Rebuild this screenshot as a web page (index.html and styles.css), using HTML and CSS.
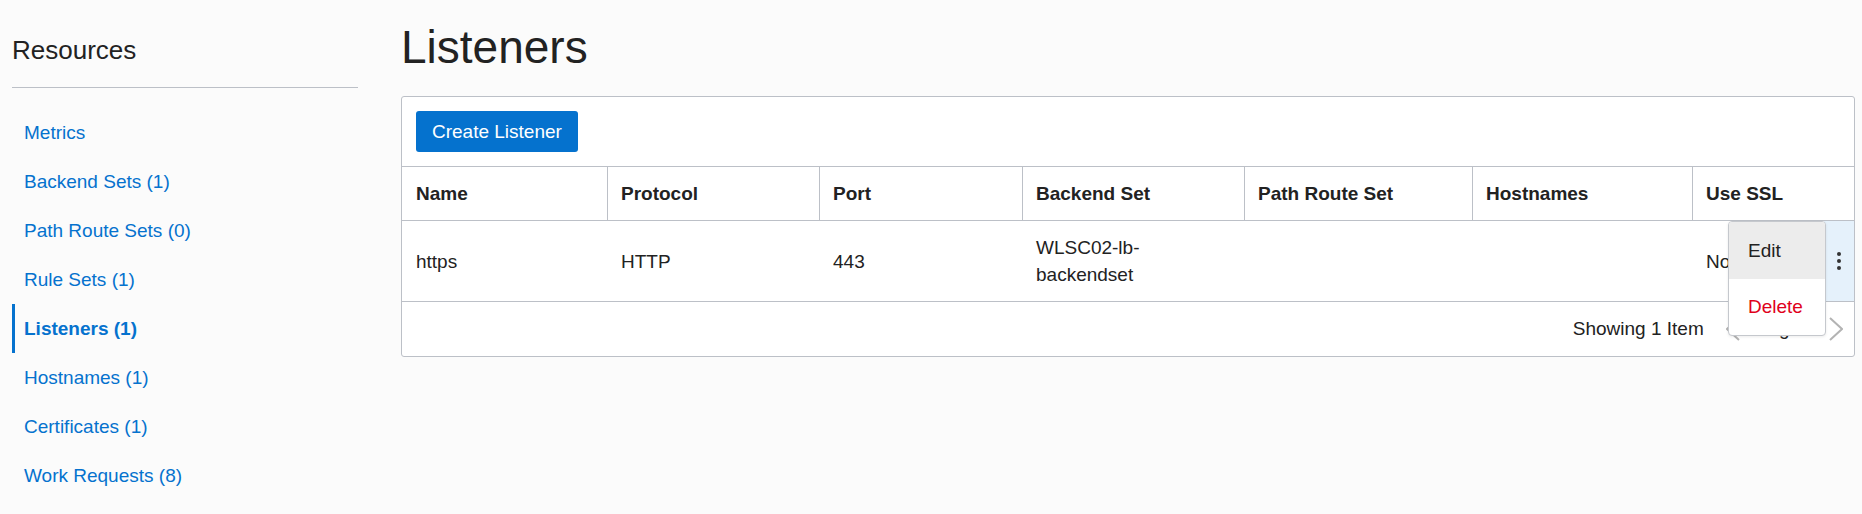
FILE: index.html
```html
<!DOCTYPE html>
<html lang="en">
<head>
<meta charset="utf-8">
<title>Listeners</title>
<link rel="stylesheet" href="styles.css">
</head>
<body>
<div class="page">
  <aside class="sidebar">
    <h2 class="side-title">Resources</h2>
    <div class="side-rule"></div>
    <nav class="side-nav">
      <a class="nav-item" href="#">Metrics</a>
      <a class="nav-item" href="#">Backend Sets (1)</a>
      <a class="nav-item" href="#">Path Route Sets (0)</a>
      <a class="nav-item" href="#">Rule Sets (1)</a>
      <a class="nav-item active" href="#">Listeners (1)</a>
      <a class="nav-item" href="#">Hostnames (1)</a>
      <a class="nav-item" href="#">Certificates (1)</a>
      <a class="nav-item" href="#">Work Requests (8)</a>
    </nav>
  </aside>
  <main class="main">
    <h1 class="title">Listeners</h1>
    <section class="panel">
      <div class="toolbar">
        <button class="btn-primary" type="button">Create Listener</button>
      </div>
      <table class="grid">
        <colgroup>
          <col class="c-name">
          <col class="c-proto">
          <col class="c-port">
          <col class="c-backend">
          <col class="c-path">
          <col class="c-host">
          <col class="c-ssl">
          <col class="c-act">
        </colgroup>
        <thead>
          <tr>
            <th>Name</th>
            <th>Protocol</th>
            <th>Port</th>
            <th>Backend Set</th>
            <th>Path Route Set</th>
            <th>Hostnames</th>
            <th>Use SSL</th>
            <th class="th-act"></th>
          </tr>
        </thead>
        <tbody>
          <tr>
            <td>https</td>
            <td>HTTP</td>
            <td>443</td>
            <td>WLSC02-lb-backendset</td>
            <td></td>
            <td></td>
            <td>No</td>
            <td class="td-act">
              <svg class="kebab" width="4" height="18" viewBox="0 0 4 18" aria-hidden="true">
                <circle cx="2" cy="2" r="2"/>
                <circle cx="2" cy="9" r="2"/>
                <circle cx="2" cy="16" r="2"/>
              </svg>
              <div class="menu">
                <div class="menu-item hover">Edit</div>
                <div class="menu-item danger">Delete</div>
              </div>
            </td>
          </tr>
        </tbody>
      </table>
      <div class="footer">
        <span class="count">Showing 1 Item</span>
        <svg class="chev chev-left" width="14" height="24" viewBox="0 0 14 24" aria-hidden="true">
          <polyline points="13,1 1,12 13,23"/>
        </svg>
        <span class="page-label">Page 1</span>
        <svg class="chev chev-right" width="14" height="24" viewBox="0 0 14 24" aria-hidden="true">
          <polyline points="1,1 13,12 1,23"/>
        </svg>
      </div>
    </section>
  </main>
</div>
</body>
</html>
```
FILE: styles.css
```css
* { box-sizing: border-box; }

html, body {
  margin: 0;
  padding: 0;
  background: #fbfbfb;
}

body {
  font-family: "Liberation Sans", Arial, sans-serif;
  font-size: 19px;
  color: #222;
}

.page {
  display: flex;
  gap: 43px;
  padding: 0 7px 0 12px;
}

/* Sidebar */
.sidebar {
  width: 346px;
  flex: none;
  padding-top: 34px;
}

.side-title {
  margin: 0;
  font-size: 26px;
  line-height: 32px;
  font-weight: normal;
  color: #222;
}

.side-rule {
  margin-top: 21px;
  border-top: 1px solid #bcc0c7;
}

.side-nav {
  margin-top: 20px;
  display: flex;
  flex-direction: column;
}

.nav-item {
  display: block;
  height: 49px;
  line-height: 49px;
  padding-left: 9px;
  border-left: 3px solid transparent;
  color: #0572ce;
  text-decoration: none;
  font-size: 19px;
}

.nav-item.active {
  border-left-color: #0572ce;
  font-weight: bold;
}

/* Main */
.main {
  flex: 1;
  min-width: 0;
  padding-top: 19px;
}

.title {
  margin: 0 0 21px;
  font-size: 46px;
  line-height: 56px;
  font-weight: normal;
  color: #222;
}

.panel {
  position: relative;
  background: #fff;
  border: 1px solid #bcc0c7;
  border-radius: 3px;
}

.toolbar {
  padding: 14px;
  border-bottom: 1px solid #bcc0c7;
}

.btn-primary {
  display: block;
  height: 41px;
  padding: 0 16px;
  border: none;
  border-radius: 3px;
  background: #0572ce;
  color: #fff;
  font-family: inherit;
  font-size: 19px;
  line-height: 41px;
}

/* Table */
.grid {
  width: 100%;
  table-layout: fixed;
  border-collapse: separate;
  border-spacing: 0;
}

.c-name { width: 205px; }
.c-proto { width: 212px; }
.c-port { width: 203px; }
.c-backend { width: 222px; }
.c-path { width: 228px; }
.c-host { width: 220px; }
.c-ssl { width: 132px; }
.c-act { width: 30px; }

.grid th {
  text-align: left;
  font-weight: bold;
  line-height: 21px;
  padding: 16px 12px 16px 13px;
  border-bottom: 1px solid #bcc0c7;
  border-left: 1px solid #bcc0c7;
  vertical-align: middle;
}

.grid th:first-child {
  border-left: none;
  padding-left: 14px;
}

.grid th.th-act {
  border-left: none;
  padding: 0;
}

.grid td {
  line-height: 27px;
  padding: 13px 12px 13px 14px;
  border-bottom: 1px solid #bcc0c7;
  vertical-align: middle;
}

.grid td.td-act {
  position: relative;
  padding: 0;
  background: #e5f1fb;
  text-align: center;
}

.kebab {
  display: block;
  margin: 0 auto;
  fill: #333;
}

/* Action menu */
.menu {
  position: absolute;
  top: 0;
  right: 28px;
  width: 98px;
  background: #fff;
  border: 1px solid #c5c8cd;
  border-radius: 4px;
  box-shadow: 0 1px 3px rgba(0, 0, 0, 0.08);
  overflow: hidden;
  text-align: left;
  z-index: 2;
}

.menu-item {
  height: 56px;
  line-height: 56px;
  padding-left: 19px;
  color: #222;
}

.menu-item.hover {
  background: #ececec;
  height: 57px;
  line-height: 57px;
}

.menu-item.danger {
  color: #e0001b;
}

/* Footer */
.footer {
  display: flex;
  justify-content: flex-end;
  align-items: center;
  height: 54px;
  padding-right: 11px;
}

.count {
  margin-right: 22px;
}

.chev {
  display: block;
  fill: none;
  stroke: #b3b3b3;
  stroke-width: 2;
}

.page-label {
  margin: 0 13px 0 16px;
}
```
